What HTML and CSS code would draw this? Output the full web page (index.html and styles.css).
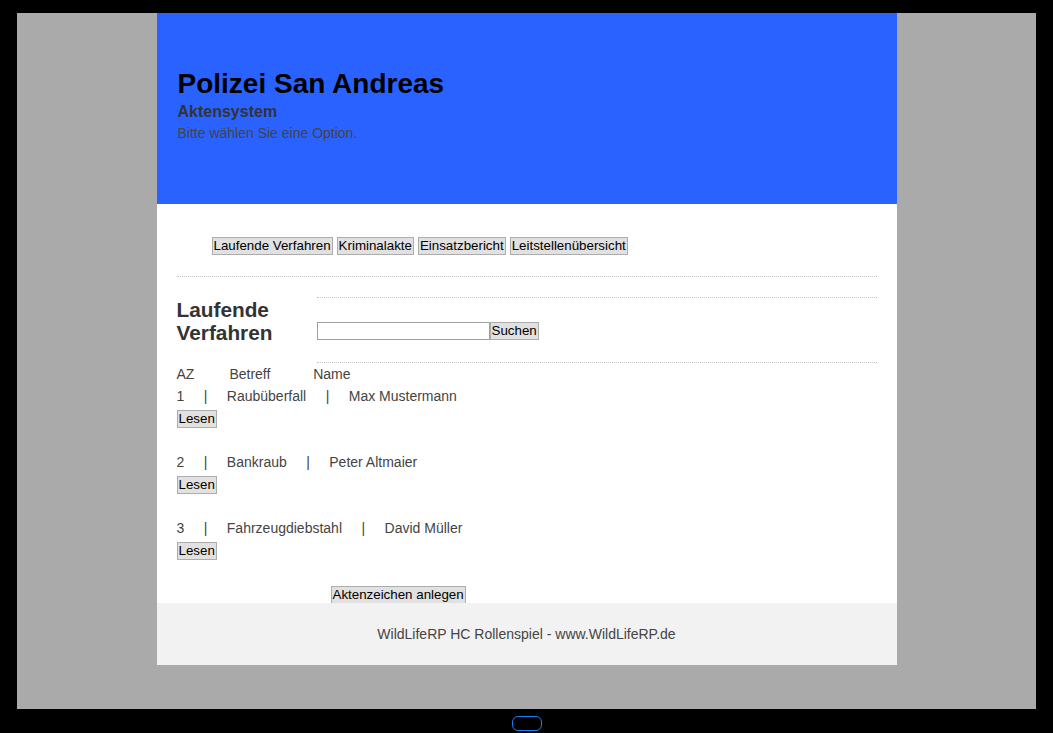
FILE: index.html
```html
<!DOCTYPE html>
<html lang="de">
<head>
  <meta charset="UTF-8" />
  <meta name="viewport" content="width=device-width, initial-scale=1.0"/>
  <title>Polizei San Andreas - Aktensystem</title>
  <link rel="stylesheet" href="styles.css">
</head>
<body>
  <div class="screen">
    <div class="page">
      <header class="header">
        <h1>Polizei San Andreas</h1>
        <h3>Aktensystem</h3>
        <p>Bitte wählen Sie eine Option.</p>
      </header>

      <main class="content">
        <nav class="menu">
          <button type="button">Laufende Verfahren</button>
          <button type="button">Kriminalakte</button>
          <button type="button">Einsatzbericht</button>
          <button type="button">Leitstellenübersicht</button>
        </nav>

        <hr class="divider" />

        <section class="cases-head">
          <h2>Laufende Verfahren</h2>
          <form class="search" onsubmit="event.preventDefault()">
            <input type="text" id="search" />
            <button type="submit">Suchen</button>
          </form>
        </section>

        <div class="case-list">
          <div class="case-row">AZ&nbsp;&nbsp;&nbsp;&nbsp;&nbsp;&nbsp;&nbsp;&nbsp;&nbsp;Betreff&nbsp;&nbsp;&nbsp;&nbsp;&nbsp;&nbsp;&nbsp;&nbsp;&nbsp;&nbsp;&nbsp;Name</div>

          <div class="case">
            <div class="case-row">1&nbsp;&nbsp;&nbsp;&nbsp;&nbsp;|&nbsp;&nbsp;&nbsp;&nbsp;&nbsp;Raubüberfall&nbsp;&nbsp;&nbsp;&nbsp;&nbsp;|&nbsp;&nbsp;&nbsp;&nbsp;&nbsp;Max Mustermann</div>
            <button type="button">Lesen</button>
          </div>

          <div class="case">
            <div class="case-row">2&nbsp;&nbsp;&nbsp;&nbsp;&nbsp;|&nbsp;&nbsp;&nbsp;&nbsp;&nbsp;Bankraub&nbsp;&nbsp;&nbsp;&nbsp;&nbsp;|&nbsp;&nbsp;&nbsp;&nbsp;&nbsp;Peter Altmaier</div>
            <button type="button">Lesen</button>
          </div>

          <div class="case">
            <div class="case-row">3&nbsp;&nbsp;&nbsp;&nbsp;&nbsp;|&nbsp;&nbsp;&nbsp;&nbsp;&nbsp;Fahrzeugdiebstahl&nbsp;&nbsp;&nbsp;&nbsp;&nbsp;|&nbsp;&nbsp;&nbsp;&nbsp;&nbsp;David Müller</div>
            <button type="button">Lesen</button>
          </div>
        </div>

        <div class="create">
          <button type="button">Aktenzeichen anlegen</button>
        </div>
      </main>

      <footer class="footer">
        WildLifeRP HC Rollenspiel - www.WildLifeRP.de
      </footer>
    </div>
  </div>

  <div class="home-button"></div>
</body>
</html>
```

FILE: styles.css
```css
body {
  margin: 0;
  padding: 0;
  background-color: #000;
  font-family: 'Liberation Sans', Arial, Helvetica, sans-serif;
  color: #444;
}

/* device screen */
.screen {
  margin: 13px 17px 0;
  height: 696px;
  background-color: #aaa;
  overflow: hidden;
}

.home-button {
  width: 28px;
  height: 13px;
  margin: 7px auto 0;
  border: 1px solid #1a80f0;
  border-radius: 6px;
}

.page {
  width: 740px;
  margin: 0 auto;
  background: #fff;
}

/* header */
.header {
  height: 191px;
  box-sizing: border-box;
  padding: 55px 20px 0 21px;
  background-color: #2962ff;
}

.header h1 {
  margin: 0;
  font-size: 28px;
  line-height: 32px;
  color: #000;
}

.header h3 {
  margin: 2px 0 0;
  font-size: 16px;
  line-height: 20px;
  color: #333;
}

.header p {
  margin: 3px 0 0;
  font-size: 14px;
  line-height: 16px;
  color: #444;
}

/* buttons look like the old windows ones */
button {
  font-family: 'Liberation Sans', Arial, Helvetica, sans-serif;
  font-size: 13.33px;
  line-height: 16px;
  height: 18px;
  padding: 0 1px;
  margin: 0;
  border: 1px solid #adadad;
  border-radius: 0;
  background-color: #e1e1e1;
  color: #000;
  cursor: pointer;
}

.content {
  padding: 33px 20px 0;
}

.menu {
  display: flex;
  gap: 4px;
  margin-left: 35px;
}

.divider {
  height: 0;
  margin: 21px 0 20px;
  border: 0;
  border-top: 1px dotted #c4c4c4;
}

/* heading + search */
.cases-head {
  display: flex;
}

.cases-head h2 {
  width: 140px;
  margin: 0;
  padding-top: 1px;
  font-size: 20.8px;
  line-height: 23px;
  color: #333;
}

.search {
  flex: 1;
  display: flex;
  align-items: flex-start;
  padding: 24px 0 22px;
  border-top: 1px dotted #c4c4c4;
  border-bottom: 1px dotted #c4c4c4;
}

.search input {
  width: 173px;
  height: 18px;
  box-sizing: border-box;
  margin: 0;
  padding: 0 2px;
  border: 1px solid #a0a0a0;
  font-size: 13px;
}

/* list */
.case-list {
  font-size: 14px;
}

.case-row {
  line-height: 22px;
  white-space: nowrap;
}

.case button {
  display: block;
  margin: 3px 0 23px;
}

.create {
  height: 18px;
  padding: 3px 0 0 154px;
  margin-bottom: -1px;
}

.create button {
  display: block;
}

.footer {
  position: relative;
  height: 62px;
  line-height: 62px;
  text-align: center;
  font-size: 14px;
  color: #444;
  background-color: #f2f2f2;
}
```
